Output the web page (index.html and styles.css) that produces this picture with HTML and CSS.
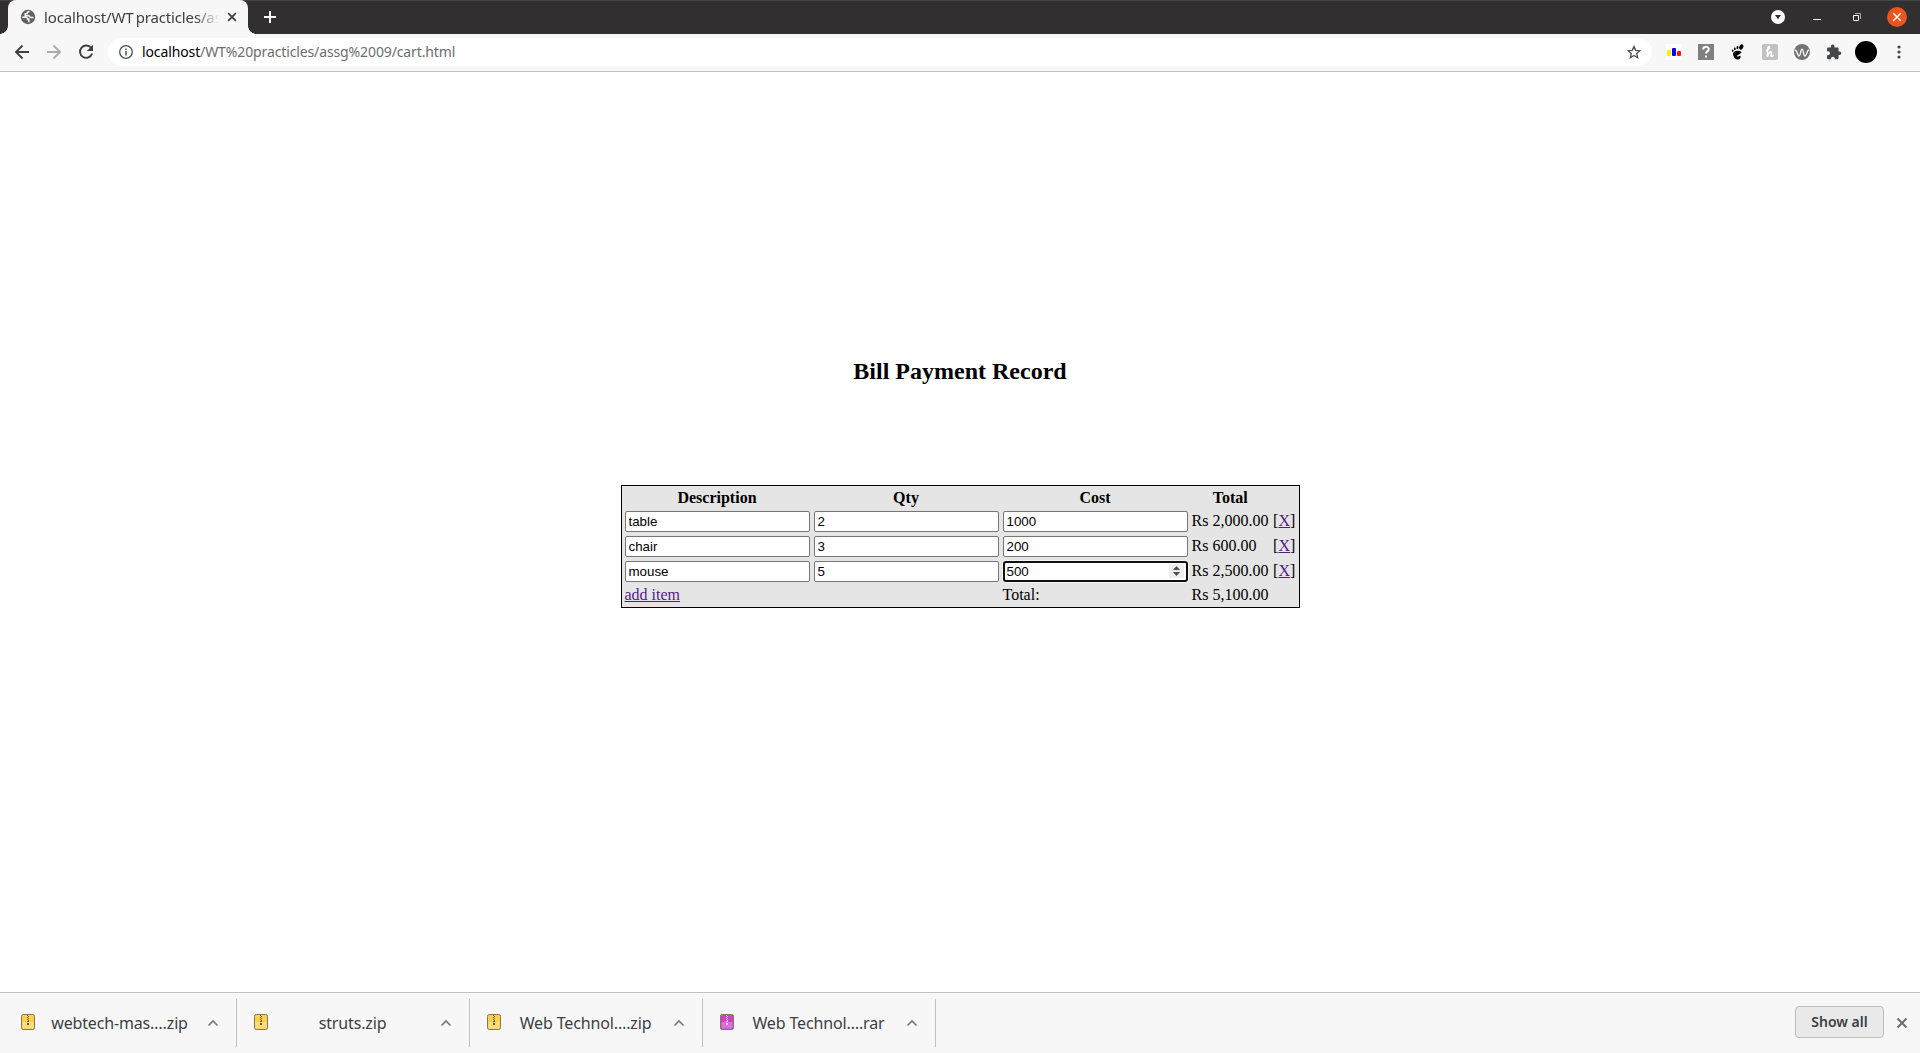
FILE: index.html
```html
<!DOCTYPE html>
<html lang="en">
<head>
<meta charset="utf-8">
<title>Bill Payment Record</title>
<link rel="stylesheet" href="styles.css">
</head>
<body>
<svg class="defs" width="0" height="0">
  <defs>
    <symbol id="archive" viewBox="0 0 14 16">
      <rect x=".5" y=".5" width="13" height="15" rx="1.8" fill="currentColor" stroke="#85755b"/>
      <path d="M1.5 8h11v6.500h-11z" fill="#fff" opacity=".25"/>
      <path d="M6 1h1v1H6zM7 2h1v1H7zM6 3h1v1H6zM7 4h1v1H7zM6 5h1v1H6zM7 6h1v1H7zM6 7h2v1H6zM6 9h2v2H6z" fill="var(--zipper)"/>
    </symbol>
    <symbol id="chevron" viewBox="0 0 12 8"><path d="M1.500 6.500L6 2l4.500 4.500" fill="none" stroke="#77797b" stroke-width="1.700"/></symbol>
  </defs>
</svg>
<header class="tabstrip">
  <div class="tab">
    <svg class="globe" width="16" height="16" viewBox="0 0 16 16"><circle cx="8" cy="8" r="7.200" fill="#5f6368"/><path d="M9.500 2.500C8 2.500 7 3.300 7 4.800H5.200v2h3.600c.9 0 .9 1.800 2 1.800h2.700M2.200 8.300h3.600c.9 0 1.700.8 1.700 2h1.300v2.900" fill="none" stroke="#f7f7f7" stroke-width="1.500"/></svg>
    <span class="tab-title">localhost/WT practicles/assg</span>
    <svg width="10" height="10" viewBox="0 0 10 10"><path d="M1.200 1.200l7.600 7.600m0-7.600L1.200 8.800" stroke="#3c4043" stroke-width="1.700"/></svg>
  </div>
  <svg class="new-tab" width="14" height="14" viewBox="0 0 14 14"><path d="M7 1v12M1 7h12" stroke="#fff" stroke-width="2"/></svg>
  <div class="window-controls">
    <svg width="14" height="14" viewBox="0 0 14 14"><circle cx="7" cy="7" r="7" fill="#fff"/><path d="M4 5h6l-3 4.200z" fill="#322f30"/></svg>
    <svg width="8" height="14" viewBox="0 0 8 14"><path d="M0 9.500h8" stroke="#fff"/></svg>
    <svg width="8" height="14" viewBox="0 0 8 14"><path d="M.5 5.500h5v5h-5z" fill="none" stroke="#fff"/><path d="M2 3.500h5.500V9" fill="none" stroke="#aaa"/></svg>
    <svg width="20" height="20" viewBox="0 0 20 20"><circle cx="10" cy="10" r="10" fill="#e95420"/><path d="M6.300 6.300l7.400 7.400m0-7.400l-7.400 7.400" stroke="#fff" stroke-width="1.500"/></svg>
  </div>
</header>
<nav class="toolbar">
  <svg class="nav-icon" width="16" height="16" viewBox="0 0 16 16"><path d="M15 8H2M8.500 1.500L2 8l6.500 6.500" fill="none" stroke="#3c4043" stroke-width="1.900"/></svg>
  <svg class="nav-icon" width="16" height="16" viewBox="0 0 16 16"><path d="M1 8h13M7.500 1.500L14 8l-6.500 6.500" fill="none" stroke="#acacac" stroke-width="1.900"/></svg>
  <svg class="nav-icon" width="16" height="16" viewBox="0 0 16 16"><path d="M13.200 4A6.200 6.200 0 1 0 14.100 9.500" fill="none" stroke="#3c4043" stroke-width="1.900"/><path d="M15 .8V7H8.800z" fill="#3c4043"/></svg>
  <div class="address">
    <svg width="14" height="14" viewBox="0 0 14 14"><circle cx="7" cy="7" r="6.300" fill="none" stroke="#4a4d50" stroke-width="1.300"/><path d="M7 6v4.500M7 3.500v1.500" stroke="#4a4d50" stroke-width="1.500"/></svg>
    <span class="url"><b>localhost</b>/WT%20practicles/assg%2009/cart.html</span>
    <svg width="14" height="14" viewBox="0 0 14 14"><path d="M7 1.400l1.700 3.900 4.200.4-3.200 2.800.95 4.200L7 10.500l-3.650 2.200.95-4.200L1.100 5.700l4.200-.4z" fill="none" stroke="#4a4d50" stroke-width="1.300"/></svg>
  </div>
  <div class="extensions">
    <svg width="16" height="16" viewBox="0 0 16 16"><path fill="#fff" d="M0 0h16v16H0z"/><rect x="1" y="6" width="4" height="6" rx="1" fill="#ffed00"/><rect x="6" y="4" width="4" height="8" rx="1" fill="#0a00f5"/><rect x="11" y="7" width="4" height="5" rx="1" fill="#f11"/></svg>
    <svg width="16" height="16" viewBox="0 0 16 16"><path fill="#808080" d="M0 0h16v16H0z"/><path d="M5.200 5.500c0-3.600 5.600-3.400 5.600-.2 0 2-2.800 2.100-2.800 4.200M8 11.500v2" fill="none" stroke="#fff" stroke-width="2"/></svg>
    <svg width="16" height="16" viewBox="0 0 16 16"><ellipse cx="11.300" cy="3" rx="1.900" ry="2.700" transform="rotate(28 11.300 3)"/><ellipse cx="7.500" cy="3.600" rx="1" ry="1.600" transform="rotate(10 7.500 3.600)"/><ellipse cx="4.800" cy="4.900" rx=".9" ry="1.400"/><ellipse cx="2.700" cy="6.700" rx=".8" ry="1.200" transform="rotate(-15 2.700 6.700)"/><path d="M11.500 8C9 5.300 2.500 7 3 10.300c.4 2.300 2 5 4.200 5.200 2.600.2 3.900-2.300 3.200-3.600-.8-1-2.200 1.200-3.300.5-1.500-1.200 3.800-1.900 4.400-4.400z"/></svg>
    <svg width="16" height="16" viewBox="0 0 16 16"><rect width="16" height="16" rx="2" fill="#c1c1c1"/><path d="M4 6.200c3 .3 4.500-3.700 2.600-3.700-1.400 0-1 4-1.200 10.500C6 9.500 9.300 6.300 9.500 8.200c.1 1.500-1.200 4.300.2 4.300.9 0 1.500-.8 2-1.600" fill="none" stroke="#fff" stroke-width="1.600"/></svg>
    <svg width="16" height="16" viewBox="0 0 16 16"><circle cx="8" cy="8" r="8" fill="#747474"/><path d="M1 6.500c1.500-2 2.300 5.500 4 5.500s1.500-6.800 3-6.800S9.400 12 11 12s2.500-7.500 4-5.500" fill="none" stroke="#fff" stroke-width="1.300"/></svg>
    <svg width="16" height="16" viewBox="0 0 16 16"><path d="M13.600 7.500h-1V4.800c0-.8-.6-1.400-1.400-1.400H8.500v-1a1.800 1.800 0 0 0-3.600 0v1H2.300C1.500 3.400 1 4 1 4.800v2.500h1a2 2 0 0 1 0 4H1v2.500c0 .8.500 1.400 1.300 1.400h2.600v-1a2 2 0 0 1 3.900 0v1h2.400c.8 0 1.400-.6 1.400-1.400V11h1a1.750 1.750 0 0 0 0-3.500z" fill="#45484a"/></svg>
  </div>
  <span class="avatar"></span>
  <svg width="4" height="14" viewBox="0 0 4 14"><g fill="#45484a"><circle cx="2" cy="2" r="1.600"/><circle cx="2" cy="7" r="1.600"/><circle cx="2" cy="12" r="1.600"/></g></svg>
</nav>
<main class="page">
  <h1>Bill Payment Record</h1>
  <table class="bill">
    <tr><th class="field">Description</th><th class="field">Qty</th><th class="field">Cost</th><th>Total</th><th></th></tr>
    <tr class="item"><td><input value="table"></td><td><input value="2"></td><td><input value="1000"></td><td>Rs 2,000.00</td><td>[<a href="#">X</a>]</td></tr>
    <tr class="item"><td><input value="chair"></td><td><input value="3"></td><td><input value="200"></td><td>Rs 600.00</td><td>[<a href="#">X</a>]</td></tr>
    <tr class="item"><td><input value="mouse"></td><td><input value="5"></td><td><div class="number-field"><input class="active" value="500"><svg class="spinner" width="15" height="14" viewBox="0 0 15 14"><path fill="#efefef" d="M0 0h15v14H0z"/><path d="M3.800 6L7.500 2l3.700 4zM3.800 8l3.700 4 3.700-4z" fill="#505050"/></svg></div></td><td>Rs 2,500.00</td><td>[<a href="#">X</a>]</td></tr>
    <tr><td><a href="#">add item</a></td><td></td><td>Total:</td><td>Rs 5,100.00</td><td></td></tr>
  </table>
</main>
<footer class="downloads">
  <div class="download"><svg class="file zip"><use href="#archive"/></svg><span>webtech-mas….zip</span><svg class="chevron"><use href="#chevron"/></svg></div>
  <div class="download"><svg class="file zip"><use href="#archive"/></svg><span>struts.zip</span><svg class="chevron"><use href="#chevron"/></svg></div>
  <div class="download"><svg class="file zip"><use href="#archive"/></svg><span>Web Technol….zip</span><svg class="chevron"><use href="#chevron"/></svg></div>
  <div class="download"><svg class="file rar"><use href="#archive"/></svg><span>Web Technol….rar</span><svg class="chevron"><use href="#chevron"/></svg></div>
  <button class="show-all">Show all</button>
  <svg width="12" height="12" viewBox="0 0 12 12"><path d="M1.500 1.500l9 9m0-9l-9 9" stroke="#6b6d6f" stroke-width="1.900"/></svg>
</footer>
</body>
</html>
```
FILE: styles.css
```css
* { box-sizing: border-box; }
body {
  margin: 0;
  height: 1053px;
  display: flex;
  flex-direction: column;
  overflow: hidden;
  background: #fff;
  color: #000;
  font: 16px "Liberation Serif", serif;
}
svg { display: block; flex: none; }
.defs { position: absolute; }

.tabstrip, .toolbar, .downloads { font-family: "Noto Sans", sans-serif; flex: none; }
.tabstrip {
  height: 34px;
  display: flex;
  align-items: center;
  padding: 0 13px 1px 8px;
  background: #322f30;
  border-top: 1px solid #464344;
}
.tab {
  position: relative;
  width: 240px;
  height: 34px;
  margin-bottom: -1px;
  margin-top: -1px;
  padding: 0 11px 1px 12px;
  display: flex;
  align-items: center;
  background: #f7f7f7;
  border-radius: 8px 8px 0 0;
  color: #3c4043;
}
.tab::before, .tab::after {
  content: "";
  position: absolute;
  bottom: 0;
  width: 8px;
  height: 8px;
}
.tab::before { left: -8px; background: radial-gradient(circle at 0 0, transparent 7.5px, #f7f7f7 8px); }
.tab::after { right: -8px; background: radial-gradient(circle at 100% 0, transparent 7.5px, #f7f7f7 8px); }
.tab-title {
  width: 176px;
  margin: 0 7px 0 8px;
  flex: none;
  overflow: hidden;
  white-space: nowrap;
  font-size: 15px;
  line-height: 20px;
  letter-spacing: -.15px;
  word-spacing: -1.5px;
  -webkit-mask-image: linear-gradient(90deg, #000 152px, transparent 175px);
  mask-image: linear-gradient(90deg, #000 152px, transparent 175px);
}
.new-tab { margin-left: 15px; }
.window-controls { display: flex; align-items: center; margin-left: auto; }
.window-controls svg:nth-child(2) { margin-left: 28px; }
.window-controls svg:nth-child(3) { margin-left: 32px; }
.window-controls svg:nth-child(4) { margin-left: 26px; }

.toolbar {
  height: 38px;
  display: flex;
  align-items: center;
  padding: 0 19px 1px 14px;
  background: #f7f7f7;
  border-bottom: 1px solid #c1c1c1;
}
.nav-icon { margin-right: 16px; }
.address {
  flex: 1;
  height: 28px;
  margin-right: 14px;
  margin-left: -2px;
  padding: 0 11px;
  display: flex;
  align-items: center;
  background: #fff;
  border-radius: 14px;
}
.url { flex: 1; margin-left: 9px; font-size: 14px; line-height: 20px; color: #6b6d70; white-space: nowrap; letter-spacing: -.12px; }
.url b { font-weight: 400; color: #000; }
.extensions { display: flex; gap: 16px; }
.avatar { width: 22px; height: 22px; margin: 0 20px 0 13px; border-radius: 50%; background: #000; }

.page { flex: 1; display: flex; flex-direction: column; align-items: center; padding-top: 285px; }
.page h1 { margin: 0; font-size: 24px; line-height: 28px; }
.bill {
  width: 679px;
  margin-top: 100px;
  border: 1px solid #000;
  border-spacing: 2px;
  background: #e5e5e5;
  line-height: 18px;
}
.bill td, .bill th { padding: 1px; }
.bill .field { width: 187px; }
.bill .item td:nth-child(n+4) { padding-bottom: 2px; }
.bill input {
  display: block;
  width: 185px;
  height: 21px;
  margin: 0;
  padding: 1px 3px;
  border: 1px solid #767676;
  border-radius: 2px;
  background: #fff;
  color: #000;
  font: 13.333px "Liberation Sans", sans-serif;
  outline: none;
}
.bill a { color: #551a8b; }
.number-field { position: relative; }
.bill .active { padding: 0 2px; border: 2px solid #101010; border-radius: 3px; box-shadow: 0 0 0 1px #f5f5f5; }
.spinner { position: absolute; right: 4px; top: 3px; }

.downloads {
  height: 61px;
  display: flex;
  align-items: center;
  padding-right: 12px;
  background: #f7f7f7;
  border-top: 1px solid #c1c1c1;
}
.download {
  width: 233px;
  height: 48px;
  padding: 0 17px;
  display: flex;
  align-items: center;
  border-right: 1px solid #c1c1c1;
  color: #3c4043;
  font-size: 16px;
}
.download:first-child { width: 237px; padding-left: 21px; }
.download span { flex: 1; padding-right: 3px; text-align: center; white-space: nowrap; letter-spacing: -.15px; }
.file { width: 14px; height: 16px; margin-top: -2px; }
.zip { color: #fdd14e; --zipper: #6d5b2a; }
.rar { color: #ca43c8; --zipper: #f3cdf2; }
.chevron { width: 12px; height: 8px; }
.show-all {
  width: 89px;
  height: 32px;
  margin: -2px 12px 0 auto;
  padding: 0 0 1px;
  border: 1px solid #bdbdbd;
  border-radius: 4px;
  background: #e9e9e9;
  color: #3c4043;
  font: 600 14px "Noto Sans", sans-serif;
}
```
